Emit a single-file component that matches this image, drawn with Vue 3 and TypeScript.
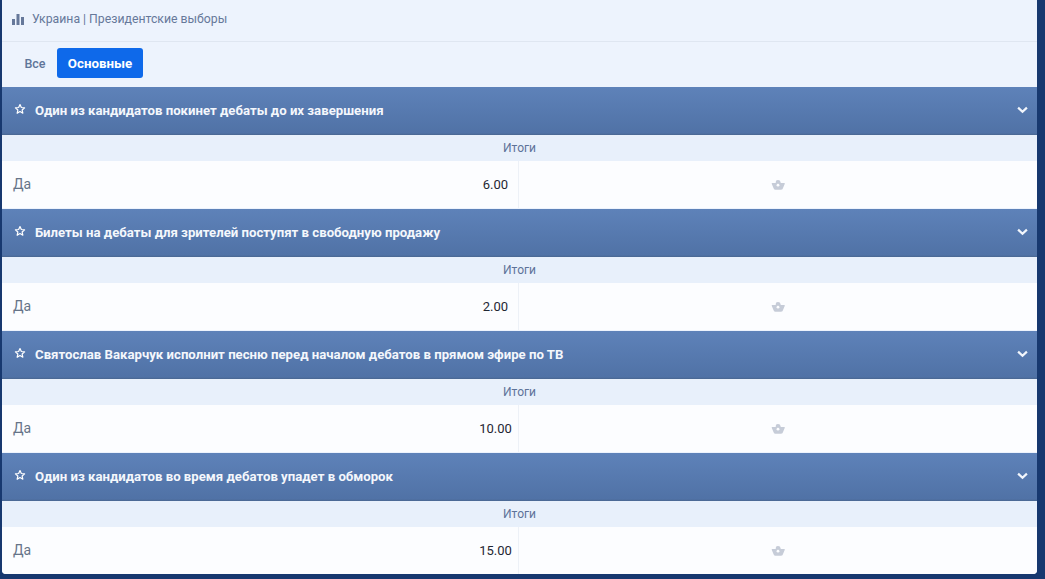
<script setup lang="ts">
interface Market {
  title: string
  odds: string
}

const markets: Market[] = [
  { title: 'Один из кандидатов покинет дебаты до их завершения', odds: '6.00' },
  { title: 'Билеты на дебаты для зрителей поступят в свободную продажу', odds: '2.00' },
  { title: 'Святослав Вакарчук исполнит песню перед началом дебатов в прямом эфире по ТВ', odds: '10.00' },
  { title: 'Один из кандидатов во время дебатов упадет в обморок', odds: '15.00' },
]
</script>

<template>
  <div class="page">
    <main class="panel">
      <div class="crumbs">
        <svg class="crumbs__icon" viewBox="0 0 12 12" width="12" height="12" aria-hidden="true">
          <path d="M0 6h3v6H0zM4.500 1h3v11h-3zM9 4h3v8H9z" />
        </svg>
        <span>Украина | Президентские выборы</span>
      </div>

      <div class="tabs">
        <button class="tab">Все</button>
        <button class="tab tab--active">Основные</button>
      </div>

      <section v-for="m in markets" :key="m.title" class="market">
        <header class="market__head">
          <svg class="star" viewBox="0 0 24 24" width="12" height="12" aria-hidden="true">
            <path d="M12 3l2.700 6 6.500.7-4.900 4.400 1.400 6.400L12 17.200l-5.700 3.300 1.400-6.400-4.900-4.400 6.500-.7z" />
          </svg>
          <span class="market__title">{{ m.title }}</span>
          <svg class="chevron" viewBox="0 0 12 8" width="11" height="8" aria-hidden="true">
            <path d="M1.200 1.400L6 6l4.800-4.600" />
          </svg>
        </header>
        <div class="market__label">Итоги</div>
        <div class="market__row">
          <div class="cell cell--bet">
            <span class="outcome">Да</span>
            <span class="odds">{{ m.odds }}</span>
          </div>
          <div class="cell cell--cash">
            <svg class="cash" viewBox="0 0 14 12" width="14" height="12" aria-hidden="true">
              <path d="M5 1.800C5.800.7 8.200.7 9 1.800L9.800 4h3.400c.5 0 .7.500.5.900l-1.900 4.600c-.3.800-.9 1.200-1.700 1.200H4.400c-.8 0-1.400-.4-1.700-1.200L.8 4.900c-.2-.4 0-.9.500-.9h3.400z" />
              <circle cx="7" cy="6.200" r="1.400" fill="#fcfdff" />
            </svg>
          </div>
        </div>
      </section>
    </main>
  </div>
</template>

<style scoped>
.page {
  height: 579px;
  box-sizing: border-box;
  padding: 0 8px 5px 2px;
  background: #17386f;
  font-family: Roboto, "Noto Sans", sans-serif;
  overflow: hidden;
}

.panel {
  height: 574px;
  overflow: hidden;
  background: #edf3fd;
  border-radius: 0 0 4px 4px;
}

.crumbs {
  display: flex;
  align-items: center;
  gap: 8px;
  height: 42px;
  box-sizing: border-box;
  padding: 0 0 4px 10px;
  border-bottom: 1px solid #dfe6f1;
  font-size: 12.250px;
  color: #66789a;
}

.crumbs__icon {
  fill: #66789a;
}

.tabs {
  display: flex;
  align-items: flex-start;
  height: 45px;
  box-sizing: border-box;
  padding: 6px 0 0 11px;
}

.tab {
  width: 44px;
  height: 30px;
  padding: 0;
  border: 0;
  border-radius: 3px;
  background: none;
  font: 500 12.500px Roboto, sans-serif;
  color: #5f7599;
}

.tab--active {
  width: 86px;
  background: #0e69ea;
  color: #fff;
  font-weight: 700;
  font-size: 13.300px;
}

.market__head {
  display: flex;
  align-items: center;
  height: 48px;
  padding: 0 9px 2px 12px;
  box-sizing: border-box;
  background: linear-gradient(180deg, #5e82b9 0%, #5072a6 96%, #496690 100%);
  color: #fff;
}

.market__title {
  flex: 1;
  margin-left: 9px;
  font-size: 13.200px;
  font-weight: 700;
  color: #f4f7fc;
}

.star {
  margin-top: -3px;
  fill: none;
  stroke: #fff;
  stroke-width: 2.400;
  stroke-linejoin: round;
}

.chevron {
  margin-top: -1px;
  fill: none;
  stroke: #f2f6fc;
  stroke-width: 2.400;
}

.market__label {
  height: 26px;
  line-height: 26px;
  text-align: center;
  font-size: 12px;
  color: #5d7399;
  background: #e8f0fb;
}

.market__row {
  display: flex;
  height: 47px;
  margin-bottom: 1px;
  background: #fcfdff;
}

.cell {
  display: flex;
  align-items: center;
  min-width: 0;
  box-sizing: border-box;
}

.cell--bet {
  flex: 0 0 517px;
  justify-content: space-between;
  padding-left: 11px;
  border-right: 1px solid #edf1f7;
}

.cell--cash {
  flex: 1;
  justify-content: center;
}

.outcome {
  margin-top: -2px;
  font-size: 14px;
  color: #667488;
}

.odds {
  width: 45px;
  text-align: center;
  font-size: 13px;
  color: #1f2733;
}

.cash {
  fill: #c6ccd8;
}
</style>

<style>
html,
body {
  margin: 0;
  background: #17386f;
}
</style>
